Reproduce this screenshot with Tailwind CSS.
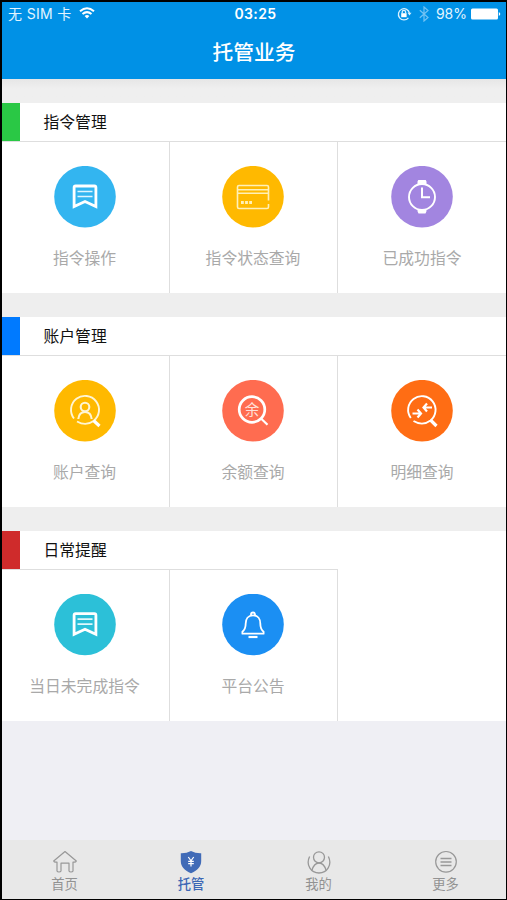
<!DOCTYPE html>
<html lang="zh-CN">
<head>
<meta charset="utf-8">
<title>托管业务</title>
<script src="https://cdn.jsdelivr.net/npm/@tailwindcss/browser@4"></script>
</head>
<body class="bg-black font-['Liberation_Sans','Noto_Sans_CJK_SC',sans-serif]">
<div class="w-[507px] h-[900px] border-t-2 border-l-2 border-r border-b border-black bg-[#efeff4] flex flex-col overflow-hidden">
  <header class="h-[77px] shrink-0 bg-[#0091e6] text-white flex flex-col">
    <div class="h-6 grid grid-cols-3 items-center font-['Inter','Noto_Sans_CJK_SC',sans-serif] text-[14px] leading-6">
      <div class="flex items-center pl-[6px] text-[#e2f5ff]">
        <span class="whitespace-pre tracking-[0.35px]">无 SIM 卡</span>
        <svg class="ml-[7px] -mt-[3px]" width="16" height="12" viewBox="0 0 16 12" fill="none" stroke="#fff" stroke-width="2"><path d="M1 4.3Q8-1.8 15 4.3M3.5 7Q8 3.2 12.5 7"/><path d="M5.6 9Q8 7 10.4 9L8 11.5Z" fill="#fff" stroke="none"/></svg>
      </div>
      <div class="text-center font-semibold pl-[3px] tracking-[0.4px]">03:25</div>
      <div class="flex items-center justify-end pr-[5px] text-[#e2f5ff]">
        <svg class="-mt-px" width="15" height="14" viewBox="0 0 15 14" fill="none" stroke="#d9f1ff" stroke-width="1.3"><path d="M11.4 10.8A5.6 5.6 0 1 1 12.5 6.3"/><path d="M10.5 5.8h4l-2 2.8z" fill="#d9f1ff" stroke="none"/><rect x="4.2" y="6.2" width="5.4" height="4" fill="#fff" stroke="none"/><path d="M5.2 6.4V5a1.7 1.7 0 0 1 3.4 0v1.4"/></svg>
        <svg class="ml-[7px] -mt-px" width="10" height="16" viewBox="0 0 10 16" fill="none" stroke="#73c3f3" stroke-width="1.2"><path d="M.8 4.3 9 11.5 5 15V1l4 3.5L.8 11.7"/></svg>
        <span class="ml-[7px]">98%</span>
        <svg class="ml-[4px] -mt-px" width="30" height="12" viewBox="0 0 30 12" fill="#fff"><rect x="0" y="0.5" width="27" height="11" rx="1.5"/><path d="M27.800 4q3 2 0 4z"/></svg>
      </div>
    </div>
    <h1 class="text-center text-[20.7px] leading-[53px] font-medium">托管业务</h1>
  </header>

  <main class="flex-1 flex flex-col">
    <div class="h-6 bg-[#eeeeee] bg-linear-to-b from-[#e6e6e6] to-[#efefef] to-40%"></div>

    <section class="h-[190px] bg-white flex flex-col">
      <div class="h-[38px] flex items-center"><div class="w-[17.5px] h-full bg-[#2ac845]"></div><h2 class="ml-[24px] pt-[2px] text-[15.8px] text-[#111]">指令管理</h2></div>
      <div class="flex-1 grid grid-cols-3 text-[15.8px] leading-6 text-[#a9a9a9]">
        <div class="border-t border-r border-[#dedede] pt-6 pr-[2px] flex flex-col items-center">
          <svg width="62" height="62" viewBox="0 0 62 62"><circle cx="31" cy="30.700" r="30.8" fill="#33b5f0"/><g fill="none" stroke="#fff" stroke-width="2.8"><path d="M20.1 40.500V21.500q0-1.5 1.5-1.5h18.800q1.5 0 1.5 1.5V40.500L31 35.500Z"/><path d="M23.500 25.500h15M23.500 30.500h15" stroke-width="1.7" stroke="#dff5ff"/></g></svg>
          <span class="mt-[19px]">指令操作</span>
        </div>
        <div class="border-t border-r border-[#dedede] pt-6 pr-px flex flex-col items-center">
          <svg width="62" height="62" viewBox="0 0 62 62"><circle cx="31" cy="30.700" r="30.8" fill="#ffb900"/><g fill="none" stroke="#fff0b8" stroke-width="1.6"><path d="M46.500 34.500V21q0-1.5-1.5-1.5h-28Q15.500 19.500 15.500 21v20q0 1.500 1.500 1.500h28Q46.500 42.500 46.500 41V38"/><path d="M15.500 23.800h31M15.500 27.200h31" stroke-width="1.600"/><path d="M19 36.500h2.800M23.100 36.500h2.800M27.200 36.500h2.800" stroke-width="2.800"/></g></svg>
          <span class="mt-[19px]">指令状态查询</span>
        </div>
        <div class="border-t border-[#dedede] pt-6 flex flex-col items-center">
          <svg width="62" height="62" viewBox="0 0 62 62"><circle cx="31" cy="30.700" r="30.8" fill="#a285e0"/><circle cx="31" cy="31" r="13" fill="none" stroke="#fff" stroke-width="1.900"/><path d="M26.500 18.300V15.500l.8-1.500h7.400l.8 1.500v2.800M26.500 43.200v2l1 2.300h7l1-2.300v-2" fill="#fff"/><path d="M31 21.500V31.300h8" fill="none" stroke="#fff" stroke-width="2"/></svg>
          <span class="mt-[19px]">已成功指令</span>
        </div>
      </div>
    </section>

    <div class="h-6 bg-[#eeeeee]"></div>

    <section class="h-[190px] bg-white flex flex-col">
      <div class="h-[38px] flex items-center"><div class="w-[17.5px] h-full bg-[#007aff]"></div><h2 class="ml-[24px] pt-[2px] text-[15.8px] text-[#111]">账户管理</h2></div>
      <div class="flex-1 grid grid-cols-3 text-[15.8px] leading-6 text-[#a9a9a9]">
        <div class="border-t border-r border-[#dedede] pt-6 pr-[2px] flex flex-col items-center">
          <svg width="62" height="62" viewBox="0 0 62 62"><circle cx="31" cy="30.700" r="30.8" fill="#ffb900"/><g fill="none" stroke="#fff5d2" stroke-width="1.900"><path d="M20 38.500A14 14 0 1 1 39.500 41Q32 46.500 23 41.500"/><circle cx="31" cy="27" r="4.300" stroke-width="2.100"/><path d="M24.300 39Q25 32 31 32T37.700 39" stroke-width="2.100"/><path d="M39.500 40.500 45.500 46" stroke="#fff" stroke-width="3.200"/></g></svg>
          <span class="mt-[19px]">账户查询</span>
        </div>
        <div class="border-t border-r border-[#dedede] pt-6 pr-px flex flex-col items-center">
          <svg width="62" height="62" viewBox="0 0 62 62"><circle cx="31" cy="30.700" r="30.8" fill="#ff6c50"/><circle cx="30" cy="29.500" r="12.800" fill="none" stroke="#fff" stroke-width="2.700"/><path d="M39 38.500 45.500 44.800" stroke="#fff" stroke-width="2.200"/><text x="30" y="34.800" text-anchor="middle" font-size="14.500" fill="#ffe0d8">余</text></svg>
          <span class="mt-[19px]">余额查询</span>
        </div>
        <div class="border-t border-[#dedede] pt-6 flex flex-col items-center">
          <svg width="62" height="62" viewBox="0 0 62 62"><circle cx="31" cy="30.700" r="30.8" fill="#ff6d14"/><g fill="none" stroke="#fff" stroke-width="1.900"><path d="M19.800 38A13.700 13.700 0 1 1 39.500 40.500Q31.500 46.500 22.500 41"/><path d="M39.500 40 45.500 46" stroke-width="3.200"/><path d="M21.500 33.500H29.500M26.500 29.500 30 33.500 26.500 37.500M41 27.500H33M36 23.500 32.500 27.500 36 31.500" stroke-width="2.200"/></g></svg>
          <span class="mt-[19px]">明细查询</span>
        </div>
      </div>
    </section>

    <div class="h-6 bg-[#eeeeee]"></div>

    <section class="h-[190px] bg-white flex flex-col">
      <div class="h-[38px] flex items-center"><div class="w-[17.5px] h-full bg-[#cf2b2b]"></div><h2 class="ml-[24px] pt-[2px] text-[15.8px] text-[#111]">日常提醒</h2></div>
      <div class="flex-1 grid grid-cols-3 text-[15.8px] leading-6 text-[#a9a9a9]">
        <div class="border-t border-r border-[#dedede] pt-6 pr-[2px] flex flex-col items-center">
          <svg width="62" height="62" viewBox="0 0 62 62"><circle cx="31" cy="30.500" r="30.8" fill="#2cc0d8"/><g fill="none" stroke="#fff" stroke-width="2.8"><path d="M20.1 40.200V21.200q0-1.5 1.5-1.5h18.800q1.5 0 1.5 1.5V40.200L31 35.200Z"/><path d="M23.500 25.200h15M23.500 30.200h15" stroke-width="1.700" stroke="#dff8fc"/></g></svg>
          <span class="mt-[19px]">当日未完成指令</span>
        </div>
        <div class="border-t border-r border-[#dedede] pt-6 pr-px flex flex-col items-center">
          <svg width="62" height="62" viewBox="0 0 62 62"><circle cx="31" cy="30.500" r="30.8" fill="#1b8ff3"/><g fill="none" stroke="#fff" stroke-width="1.800" stroke-linejoin="round"><path d="M29 21.500V20.500a2 2 0 0 1 4 0V21.500"/><path d="M31 21.300c-5 0-7.300 3.700-7.300 8.200 0 5-1.200 6.500-3.300 8.200V39.700h21.200v-2c-2.100-1.700-3.300-3.200-3.300-8.200 0-4.500-2.300-8.200-7.300-8.200Z"/><path d="M26.500 43h9" stroke-width="2.200"/></g></svg>
          <span class="mt-[19px]">平台公告</span>
        </div>
      </div>
    </section>
  </main>

  <nav class="h-[59px] shrink-0 bg-[#e8e8e8] grid grid-cols-[125px_128px_127px_127px] text-[13.3px] leading-[18px] text-[#929292] pt-[9px]">
    <a class="flex flex-col items-center">
      <svg width="26" height="26" viewBox="0 0 26 26" fill="none" stroke="#989898" stroke-width="1.200" stroke-linejoin="round"><path d="M13 2.500 1.700 12q.5 1.500 3.300 1V22q.5 1 2 1t2-1V14.200h8V22q.5 1 2 1t2-1V13q2.800.5 3.300-1Z"/></svg>
      <span class="mt-px">首页</span>
    </a>
    <a class="flex flex-col items-center text-[#3c67b5]">
      <svg width="26" height="26" viewBox="0 0 26 26"><path d="M13 2Q17.500 4.500 23.200 4.300V12c0 6-4 9.500-10.200 12.300C6.800 21.500 2.800 18 2.800 12V4.300Q8.500 4.500 13 2Z" fill="#416bb7"/><path d="M10.300 8 13 11.800 15.700 8M13 11.800V17.500M10.200 12.300h5.600M10.200 14.700h5.600" fill="none" stroke="#fff" stroke-width="1.200"/></svg>
      <span class="mt-px font-medium">托管</span>
    </a>
    <a class="flex flex-col items-center">
      <svg width="26" height="26" viewBox="0 0 26 26" fill="none" stroke="#989898" stroke-width="1.300"><circle cx="13" cy="8.300" r="5.500"/><path d="M3.600 7.500C-.5 16 5 24 13 24S26.500 16 22.400 7.500"/><path d="M6 21.300Q8 14 13 14t7 7.300"/></svg>
      <span class="mt-px">我的</span>
    </a>
    <a class="flex flex-col items-center">
      <svg width="26" height="26" viewBox="0 0 26 26" fill="none" stroke="#989898" stroke-width="1.200"><circle cx="13" cy="12.800" r="10.300"/><path d="M7.500 9.500h11M7.500 13h11M7.500 16.500h11" stroke-width="1.400"/></svg>
      <span class="mt-px">更多</span>
    </a>
  </nav>
</div>
</body>
</html>
